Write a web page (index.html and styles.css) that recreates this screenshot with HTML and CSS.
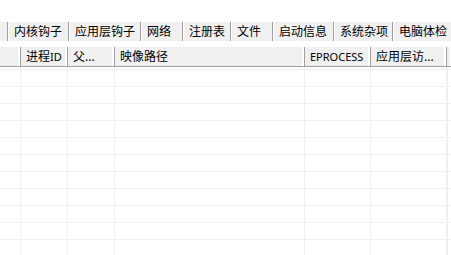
FILE: index.html
```html
<!DOCTYPE html>
<html lang="zh-CN">
<head>
    <meta charset="UTF-8">
    <title>进程</title>
    <link rel="stylesheet" href="styles.css">
</head>
<body>
    <div class="tab-bar">
        <div class="tab-lead"></div>
        <div class="tab w61">内核钩子</div>
        <div class="tab w72">应用层钩子</div>
        <div class="tab w42">网络</div>
        <div class="tab w48">注册表</div>
        <div class="tab w42">文件</div>
        <div class="tab w61">启动信息</div>
        <div class="tab w59">系统杂项</div>
        <div class="tab tab-last">电脑体检</div>
    </div>

    <div class="list">
        <div class="list-head">
            <div class="col c1"></div>
            <div class="col c2">进程<span class="latin">ID</span></div>
            <div class="col c3">父...</div>
            <div class="col c4">映像路径</div>
            <div class="col c5"><span class="latin">EPROCESS</span></div>
            <div class="col c6">应用层访...</div>
            <div class="col c7"></div>
        </div>
        <div class="list-body" id="rows"></div>
    </div>

    <script>
        var rows = document.getElementById('rows');
        for (var i = 0; i < 12; i++) {
            var row = document.createElement('div');
            row.className = i === 0 ? 'row row-top' : 'row';
            for (var c = 1; c <= 7; c++) {
                var cell = document.createElement('div');
                cell.className = 'cell c' + c;
                row.appendChild(cell);
            }
            rows.appendChild(row);
        }
    </script>
</body>
</html>
```

FILE: styles.css
```css
body {
    margin: 0;
    background: #ffffff;
    font-family: "Noto Sans", "Noto Sans CJK SC", sans-serif;
    font-size: 12px;
    color: #000000;
    overflow: hidden;
    width: 451px;
    height: 255px;
}

/* tab strip */
.tab-bar {
    display: flex;
    margin-top: 22px;
    height: 19px;
    background: #f0f0f0;
    white-space: nowrap;
    overflow: hidden;
}

.tab-lead {
    flex: 0 0 7px;
}

.tab {
    flex: 0 0 auto;
    box-sizing: border-box;
    border-left: 1px solid #a0a0a0;
    box-shadow: inset 1px 0 0 #ffffff;
    padding: 1px 0 0 6px;
    line-height: 18px;
}

.tab-last {
    flex: 1 1 auto;
    overflow: hidden;
}

.w42 { width: 42px; }
.w48 { width: 48px; }
.w59 { width: 59px; }
.w61 { width: 61px; }
.w72 { width: 72px; }

/* list view */
.list {
    margin-top: 6px;
}

.list-head {
    display: flex;
    height: 20px;
    box-sizing: border-box;
    background: #f0f0f0;
    border-bottom: 1px solid #a0a0a0;
    white-space: nowrap;
    overflow: hidden;
}

.col {
    box-sizing: border-box;
    flex: 0 0 auto;
    border-right: 1px solid #a0a0a0;
    box-shadow: inset -2px 0 0 #ffffff;
    padding: 1px 0 0 5px;
    line-height: 18px;
    overflow: hidden;
}

.latin {
    font-size: 11px;
}

.c1 { width: 21px; }
.c2 { width: 47px; }
.c3 { width: 47px; }
.c4 { width: 190px; }
.c5 { width: 66px; }
.c6 { width: 76px; }
.c7 { flex: 1 1 auto; }

.list-head .c1 { padding-left: 0; }

.list-body {
    overflow: hidden;
}

.row {
    display: flex;
    height: 17px;
    box-sizing: border-box;
    border-top: 1px solid #f0f0f0;
}

.row-top {
    height: 2px;
    border-top: 0;
}

.cell {
    box-sizing: border-box;
    flex: 0 0 auto;
    border-right: 1px solid #f0f0f0;
}
```
